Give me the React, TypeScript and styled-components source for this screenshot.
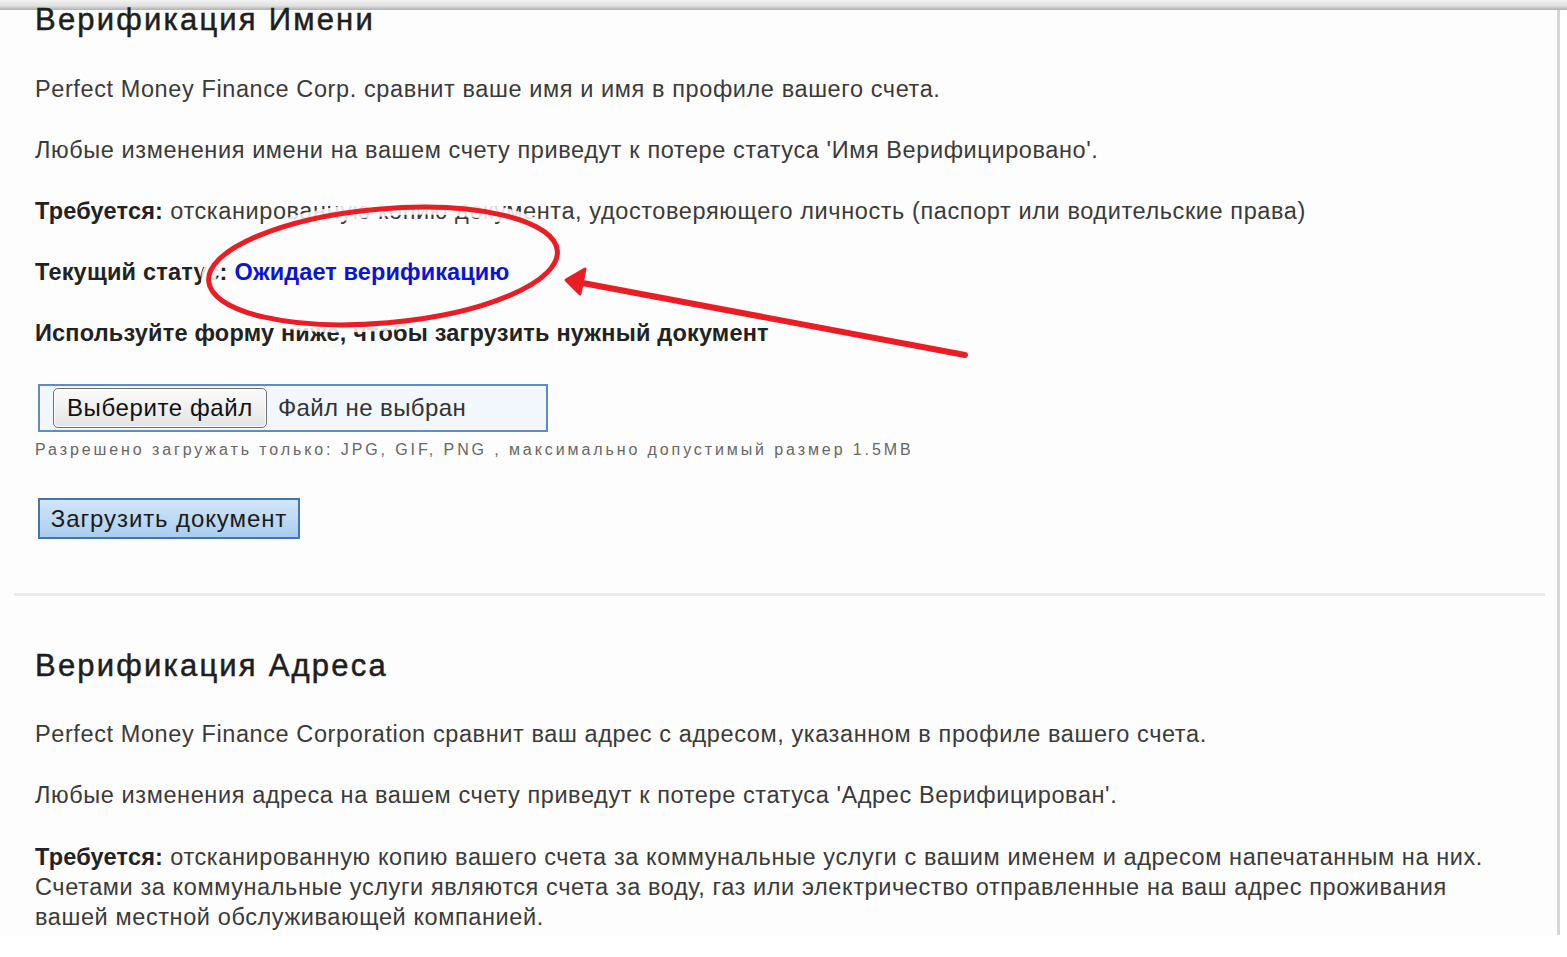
import { createGlobalStyle } from 'styled-components';
import styled from 'styled-components';

const GlobalStyle = createGlobalStyle`
  html, body {
    margin: 0;
    padding: 0;
    background: #ffffff;
  }
  body {
    font-family: "Liberation Sans", Arial, sans-serif;
  }
`;

const Page = styled.div`
  position: relative;
  width: 1567px;
  height: 957px;
  overflow: hidden;
  background: #ffffff;
`;

const TopBar = styled.div`
  height: 10px;
  background: linear-gradient(#f2f2f2 0, #e2e2e2 55%, #b0b0b0 100%);
`;

const Frame = styled.div`
  width: 1560px;
  height: 925px;
  padding-left: 3px;
  border-right: 3px solid #d6d6d6;
  background: #fdfdfd;
  box-sizing: border-box;
`;

const Section = styled.section`
  padding-left: 32px;
  display: flex;
  flex-direction: column;
  align-items: flex-start;
`;

const Heading = styled.h2<{ $gap: number }>`
  margin: ${p => p.$gap}px 0 0;
  font-size: 31px;
  line-height: 28px;
  letter-spacing: 2.2px;
  font-weight: normal;
  color: #1e1e1e;
  -webkit-text-stroke: 0.5px #1e1e1e;
`;

const Paragraph = styled.p<{ $gap?: number; $strong?: boolean }>`
  margin: ${p => p.$gap ?? 31}px 0 0;
  font-size: 23.5px;
  line-height: 30px;
  letter-spacing: ${p => (p.$strong ? '0.1px' : '0.6px')};
  color: #3a3a3a;
  font-weight: ${p => (p.$strong ? 'bold' : 'normal')};
  white-space: pre-line;
`;

const Label = styled.b`
  color: #222;
  letter-spacing: 0.2px;
`;

const Status = styled.b`
  color: #0a14d6;
  letter-spacing: 0.1px;
`;

const FileBox = styled.div`
  margin: 36px 0 0 3px;
  width: 510px;
  height: 48px;
  box-sizing: border-box;
  border: 2px solid #5d8cc6;
  background: #f1f7fd;
  display: flex;
  align-items: center;
  padding-left: 13px;
  gap: 11px;
`;

const ChooseButton = styled.button`
  height: 40px;
  padding: 0 13px;
  border: 1px solid #6f6f6f;
  border-radius: 5px;
  background: linear-gradient(#fbfbfb, #e4e4e4);
  font-family: "Liberation Sans", Arial, sans-serif;
  font-size: 24px;
  letter-spacing: 0.6px;
  color: #111;
  box-shadow: inset 0 0 0 1px #ffffff;
`;

const NoFile = styled.span`
  font-size: 24px;
  letter-spacing: 0.4px;
  color: #333;
`;

const Hint = styled.div`
  margin-top: 8px;
  font-size: 16px;
  line-height: 20px;
  letter-spacing: 2.9px;
  color: #666;
`;

const UploadButton = styled.button`
  margin: 38px 0 0 3px;
  width: 262px;
  height: 41px;
  border: 2px solid #3f76b8;
  background: linear-gradient(#d3e6f8, #a9cdef);
  font-family: "Liberation Sans", Arial, sans-serif;
  font-size: 24px;
  letter-spacing: 0.9px;
  color: #1a1a1a;
  padding: 0;
`;

const Divider = styled.hr`
  margin: 54px 0 0 11px;
  width: 1531px;
  height: 3px;
  border: 0;
  background: #ebebeb;
`;

const Annotation = styled.svg`
  position: absolute;
  left: 0;
  top: 0;
  pointer-events: none;
`;

export default function App() {
  return (
    <>
      <GlobalStyle />
      <Page>
        <TopBar />
        <Frame>
          <Section>
            <Heading $gap={-4}>Верификация Имени</Heading>
            <Paragraph $gap={40}>
              Perfect Money Finance Corp. сравнит ваше имя и имя в профиле вашего счета.
            </Paragraph>
            <Paragraph>
              Любые изменения имени на вашем счету приведут к потере статуса 'Имя Верифицировано'.
            </Paragraph>
            <Paragraph>
              <Label>Требуется:</Label> отсканированную копию документа, удостоверяющего личность (паспорт или водительские права)
            </Paragraph>
            <Paragraph>
              <Label>Текущий статус:</Label> <Status>Ожидает верификацию</Status>
            </Paragraph>
            <Paragraph $strong>
              <Label>Используйте форму ниже, чтобы загрузить нужный документ</Label>
            </Paragraph>
            <FileBox>
              <ChooseButton type="button">Выберите файл</ChooseButton>
              <NoFile>Файл не выбран</NoFile>
            </FileBox>
            <Hint>Разрешено загружать только: JPG, GIF, PNG , максимально допустимый размер 1.5MB</Hint>
            <UploadButton type="button">Загрузить документ</UploadButton>
          </Section>
          <Divider />
          <Section>
            <Heading $gap={56}>Верификация Адреса</Heading>
            <Paragraph $gap={39}>
              Perfect Money Finance Corporation сравнит ваш адрес с адресом, указанном в профиле вашего счета.
            </Paragraph>
            <Paragraph>
              Любые изменения адреса на вашем счету приведут к потере статуса 'Адрес Верифицирован'.
            </Paragraph>
            <Paragraph $gap={32}>
              <Label>Требуется:</Label> отсканированную копию вашего счета за коммунальные услуги с вашим именем и адресом напечатанным на них.
              {'\n'}Счетами за коммунальные услуги являются счета за воду, газ или электричество отправленные на ваш адрес проживания
              {'\n'}вашей местной обслуживающей компанией.
            </Paragraph>
          </Section>
        </Frame>
        <Annotation width="1567" height="957" viewBox="0 0 1567 957">
          <ellipse
            cx="383"
            cy="266"
            rx="175"
            ry="57"
            transform="rotate(-5 383 266)"
            fill="none"
            stroke="#fdfdfd"
            strokeOpacity="0.85"
            strokeWidth="15"
          />
          <ellipse
            cx="383"
            cy="266"
            rx="175"
            ry="57"
            transform="rotate(-5 383 266)"
            fill="none"
            stroke="#ec1c24"
            strokeWidth="5"
          />
          <line x1="965" y1="355" x2="572" y2="281" stroke="#ec1c24" strokeWidth="6" strokeLinecap="round" />
          <path d="M566 280 L585 269 L580 294 Z" fill="#ec1c24" stroke="#ec1c24" strokeWidth="3" strokeLinejoin="round" />
        </Annotation>
      </Page>
    </>
  );
}
